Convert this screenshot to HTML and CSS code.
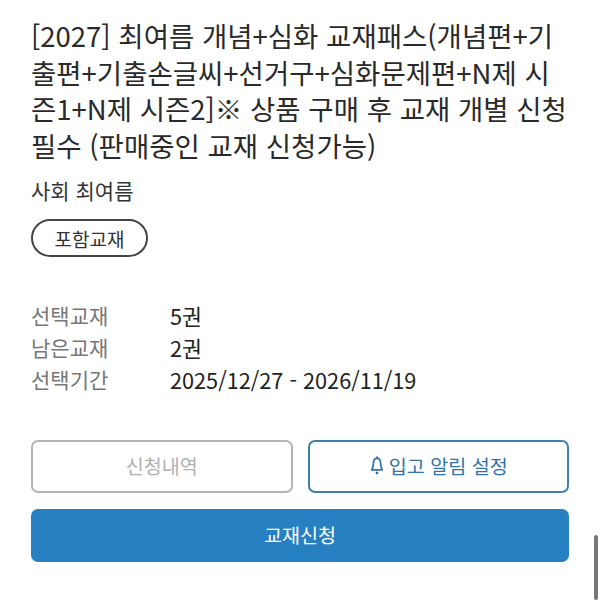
FILE: index.html
```html
<!DOCTYPE html>
<html lang="ko">
<head>
<meta charset="utf-8">
<title>교재패스</title>
<link rel="stylesheet" href="styles.css">
</head>
<body>
<main class="page">
  <h1 class="title">[2027] 최여름 개념+심화 교재패스(개념편+기<br>출편+기출손글씨+선거구+심화문제편+N제 시<br>즌1+N제 시즌2]※ 상품 구매 후 교재 개별 신청<br>필수 (판매중인 교재 신청가능)</h1>
  <p class="teacher">사회 최여름</p>
  <span class="tag">포함교재</span>
  <dl class="info">
    <div class="row"><dt>선택교재</dt><dd>5권</dd></div>
    <div class="row"><dt>남은교재</dt><dd>2권</dd></div>
    <div class="row"><dt>선택기간</dt><dd>2025/12/27 - 2026/11/19</dd></div>
  </dl>
  <div class="actions">
    <div class="pair">
      <button class="btn btn-muted" type="button">신청내역</button>
      <button class="btn btn-outline" type="button">
        <svg class="bell" viewBox="0 0 12 19" aria-hidden="true"><path d="M6 2.2C3.6 2.6 2.5 4.6 2.4 7.2C2.3 10 1.8 11.6 .9 13.9H11.1C10.2 11.6 9.7 10 9.6 7.2C9.5 4.6 8.4 2.6 6 2.2Z"/><path d="M6 .4V2.2"/><circle cx="6" cy="16.9" r="1.4"/></svg>입고 알림 설정
      </button>
    </div>
    <button class="btn btn-primary" type="button">교재신청</button>
  </div>
</main>
<div class="scrollbar"></div>
</body>
</html>
```
FILE: styles.css
```css
* { box-sizing: border-box; }
html, body { margin: 0; height: 600px; overflow: hidden; background: #fff; }
body { font-family: "Noto Sans CJK KR", "Noto Sans", sans-serif; color: #222; }
.page { padding: 17px 31px 0; }
.title { margin: 0; font-size: 27.5px; font-weight: 400; line-height: 36.5px; color: #2a2a2a; white-space: nowrap; }
.teacher { margin: 12px 0 0; font-size: 21px; line-height: 30px; color: #333; }
.tag { display: flex; align-items: center; justify-content: center; width: 117px; height: 38px; margin-top: 14px; border: 2px solid #444; border-radius: 19px; font-size: 19px; color: #333; }
.info { margin: 42px 0 0; }
.row { display: flex; height: 32px; align-items: center; font-size: 21px; }
.row dt { width: 139px; color: #777; }
.row dd { margin: 0; color: #222; font-size: 21.7px; }
.actions { display: flex; flex-direction: column; gap: 16px; margin-top: 45px; }
.pair { display: grid; grid-template-columns: 1fr 1fr; gap: 15px; }
.btn { display: flex; align-items: center; justify-content: center; height: 53px; padding: 0 0 3px; border-radius: 7px; background: #fff; font: inherit; font-size: 19.6px; }
.btn-muted { border: 2px solid #b4b4b4; color: #b0b0b0; }
.btn-outline { border: 2px solid #3f7fae; color: #2f74a8; padding-left: 2px; }
.btn-primary { width: 100%; border: 0; background: #2780c2; color: #fff; }
.bell { width: 12px; height: 19px; margin-right: 6px; fill: none; stroke: #2f74a8; stroke-width: 1.7; }
.bell circle { fill: #2f74a8; stroke: none; }
.scrollbar { position: absolute; left: 594px; top: 535px; width: 4px; height: 65px; border-radius: 2px; background: #777; }
```
